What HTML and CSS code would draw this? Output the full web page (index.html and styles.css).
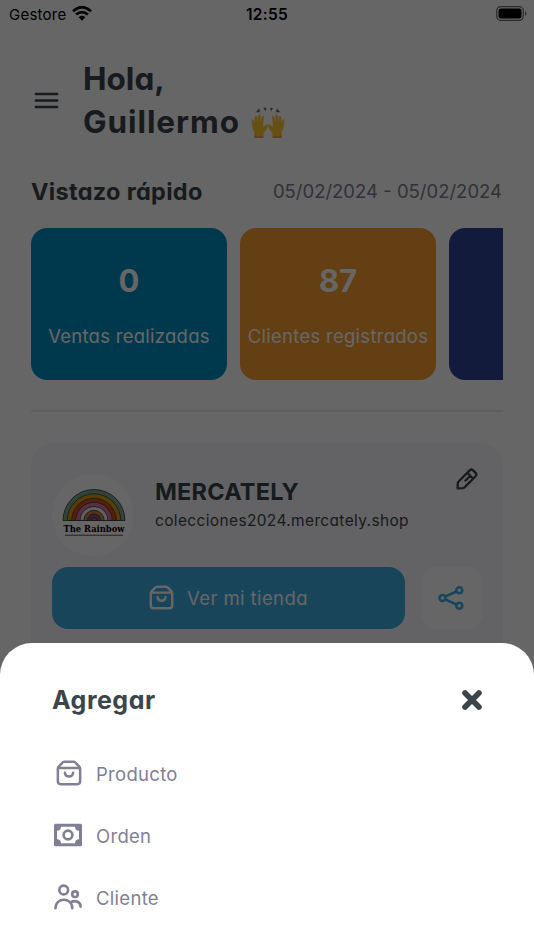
FILE: index.html
```html
<!DOCTYPE html>
<html lang="es">
<head>
<meta charset="utf-8">
<title>Mercately</title>
<link rel="stylesheet" href="styles.css">
</head>
<body>
<svg class="symbols" aria-hidden="true">
  <symbol id="bag" viewBox="0 0 28 28" fill="none" stroke="currentColor" stroke-width="2.7" stroke-linecap="round" stroke-linejoin="round">
    <path d="M2 9V23q0 3 3 3h18q3 0 3-3V9q0-1-.9-1.900L21.500 3.300Q20.400 2 19 2H9Q7.600 2 6.500 3.300L2.900 7.100Q2 8 2 9zM2.700 8.500h22.600M9.600 13.800c.6 5.200 8.200 5.200 8.800 0"/>
  </symbol>
</svg>
<div class="screen">
  <header class="status">
    <div class="carrier"><span class="t-carrier">Gestore</span>
      <svg class="wifi" viewBox="0 0 20 15"><path d="M1 5.200q9-8.100 18 0M4.100 8.600q5.900-5.100 11.800 0" fill="none" stroke="#000" stroke-width="2.700"/><path d="M6.600 11.200q3.400-2.800 6.800 0L10 14.700z"/></svg>
    </div>
    <span class="t-time">12:55</span>
    <svg class="battery" viewBox="0 0 31 15"><rect x=".7" y=".7" width="26.600" height="13.600" rx="4" fill="none" stroke="#6a6a6a" stroke-width="1.200"/><rect x="2.500" y="2.500" width="23" height="10" rx="2.300"/><path d="M29 5.200q3 2.300 0 4.600z" fill="#6a6a6a"/></svg>
  </header>

  <div class="greeting">
    <svg class="menu" viewBox="0 0 24 17"><path d="M1.300 2h21.400M1.300 8.500h21.400M1.300 15h21.400" stroke="currentColor" stroke-width="2.400" stroke-linecap="round"/></svg>
    <h1><span class="t-hola">Hola,</span><br><span class="t-name">Guillermo</span>
      <svg class="hands" viewBox="0 0 34 32">
        <path d="M4.800 5.300l3.300-4 1.200 4zM12.200 .8l3.400-.1-1.200 3.900zM18.800 .7l3.300.2-2 3.700zM26 1.300l3.300 4-4.500 0z" fill="#777"/>
        <g id="hand" fill="#ffc52e"><path d="M3.200 31v-6C1.500 22 .7 18 .8 13q1.300-1.400 2.100.5l.5 3 .5-6.800q1.200-1.700 2.200 0l.4 6 .8-7.500q1.300-1.500 2.300.2l.1 7.300 1.200-6.300q1.500-1.300 2 .4l-.6 7.500-.1 3.200 2.700-3q2-1 2.100 1-1.400 5.100-4.500 7.500V31z"/><path d="M3.300 29h9.100v2H3.300z" fill="#f0a92a"/></g>
        <use href="#hand" transform="translate(34 0) scale(-1 1)"/>
      </svg>
    </h1>
  </div>

  <div class="overview"><h2 class="t-vistazo">Vistazo rápido</h2><span class="t-date">05/02/2024 - 05/02/2024</span></div>
  <div class="cards">
    <article class="card sales"><strong>0</strong><span>Ventas realizadas</span></article>
    <article class="card clients"><strong>87</strong><span>Clientes registrados</span></article>
    <article class="card next"></article>
  </div>
  <hr>

  <section class="shop">
    <div class="shop-head">
      <div class="logo">
        <svg viewBox="0 0 82 82">
          <g stroke="#38383a" stroke-width=".8">
            <path d="M11 46.500a31 31 0 0 1 62 0z" fill="#7ca999"/>
            <path d="M15.300 46.500a26.700 26.700 0 0 1 53.400 0z" fill="#d89d00"/>
            <path d="M19.700 46.500a22.300 22.300 0 0 1 44.600 0z" fill="#d84e20"/>
            <path d="M23.800 46.500a18.200 18.200 0 0 1 36.400 0z" fill="#db74a2"/>
            <path d="M28 46.500a14 14 0 0 1 28 0z" fill="#f2f2f4"/>
            <path d="M31.800 46.500a10.200 10.200 0 0 1 20.400 0z" fill="#d77d42"/>
            <path d="M35.500 46.500a6.500 6.500 0 0 1 13 0z" fill="#795093"/>
            <path d="M39 46.500a3 3 0 0 1 6 0z" fill="#d84e20"/>
          </g>
          <text x="11.500" y="58" textLength="61" lengthAdjust="spacingAndGlyphs">The Rainbow</text>
          <path d="M13 61.300h58" stroke="#555" stroke-width="1.100"/>
        </svg>
      </div>
      <div class="shop-info"><h2 class="t-shop">MERCATELY</h2><span class="t-url">colecciones2024.mercately.shop</span></div>
      <svg class="pencil" viewBox="0 0 22 22" fill="none" stroke="currentColor" stroke-width="2.300" stroke-linejoin="round"><path d="M1.600 20.400l.2-5.200q.1-1 .8-1.700L13.700 2.400q1.700-1.700 3.400 0l2.500 2.500q1.700 1.700 0 3.400L8.500 19.400q-.7.700-1.700.8zM11.300 4.800l5.900 5.900M8.800 13.200l5.200-5.200"/></svg>
    </div>
    <div class="shop-actions">
      <button class="visit"><svg class="bag"><use href="#bag"/></svg><span>Ver mi tienda</span></button>
      <button class="share"><svg viewBox="0 0 26 24" fill="none" stroke="currentColor" stroke-width="2.500"><circle cx="4.500" cy="12" r="3"/><circle cx="21.300" cy="4.200" r="3"/><circle cx="21.300" cy="19.800" r="3"/><path d="M7.300 10.700l11.200-5.200M7.300 13.300l11.200 5.200"/></svg></button>
    </div>
  </section>

  <div class="backdrop"></div>
  <section class="sheet">
    <div class="sheet-head"><h2 class="t-agregar">Agregar</h2>
      <svg class="close" viewBox="0 0 20 20"><path d="M3 3l14 14M17 3L3 17" stroke="currentColor" stroke-width="5.600" stroke-linecap="round"/></svg>
    </div>
    <ul>
      <li><svg class="product"><use href="#bag"/></svg><span>Producto</span></li>
      <li><svg viewBox="0 0 28 28"><rect y="2.700" width="28" height="22.600" rx="1.500" fill="currentColor"/><path d="M7 5.800h14q0 3.700 3.900 4v8.400q-3.900.3-3.900 4H7q0-3.700-3.900-4V9.800q3.900-.3 3.900-4z" fill="#fff"/><circle cx="14" cy="14" r="4.400" fill="none" stroke="currentColor" stroke-width="2.600"/></svg><span>Orden</span></li>
      <li><svg viewBox="0 0 28 28" fill="none" stroke="currentColor" stroke-width="2.600" stroke-linecap="round"><circle cx="9.700" cy="7" r="4.400"/><circle cx="21" cy="11.200" r="2.800"/><path d="M1.500 25.300c0-11.400 16.800-11.400 16.800 0M17.300 19c4-2.300 9.300.2 9.300 4.600"/></svg><span>Cliente</span></li>
    </ul>
  </section>
</div>
</body>
</html>
```
FILE: styles.css
```css
* { box-sizing: border-box; }
body { margin: 0; color: #3b454b; font-family: Inter, "Open Sans", sans-serif; font-feature-settings: "cv11"; }
h1, h2, ul { margin: 0; padding: 0; }
h1, h2 { font-weight: 700; white-space: nowrap; }
button { border: 0; padding: 0; font: inherit; font-feature-settings: inherit; }
svg { display: block; flex: none; }
.symbols { position: absolute; width: 0; height: 0; }
.screen { position: relative; width: 534px; height: 950px; overflow: hidden; background: #fff; padding: 0 31px; }
.status { display: grid; grid-template-columns: 1fr auto 1fr; align-items: center; height: 28px; margin: 0 -24px 0 -22px; color: #000; }
.carrier { display: flex; align-items: center; gap: 5px; font-size: 15px; letter-spacing: .25px; }
.wifi { width: 20px; height: 15px; margin-top: -2px; }
.t-time { font-size: 15.5px; font-weight: 600; letter-spacing: .25px; margin-right: 2px; }
.battery { width: 31px; height: 15px; justify-self: end; margin-top: -1px; }
.greeting { display: flex; align-items: center; height: 88px; margin-top: 28px; padding-left: 3px; }
.menu { width: 25px; height: 17px; margin-right: 24px; }
h1 { font-size: 31.500px; line-height: 43.500px; }
.t-hola { letter-spacing: 0; }
.t-name { letter-spacing: .9px; }
.hands { display: inline-block; width: 34px; height: 32px; margin-left: 4px; vertical-align: -6px; }
.overview { display: flex; justify-content: space-between; align-items: center; height: 30px; margin-top: 32px; padding-right: 1px; }
.t-vistazo { font-size: 23.500px; letter-spacing: .3px; }
.t-date { font-size: 18.500px; color: #7c7c92; letter-spacing: 0; }
.cards { display: flex; gap: 13px; margin-top: 22px; width: 472px; overflow: hidden; }
.card { flex: none; width: 196px; height: 151.500px; border-radius: 16px; color: #fff; display: flex; flex-direction: column; align-items: center; padding-top: 32px; }
.card strong { font-size: 31px; line-height: 42px; }
.card span { font-size: 18.500px; line-height: 26px; margin-top: 21px; letter-spacing: .27px; white-space: nowrap; }
.sales { background: #0090c3; }
.clients { background: #fa9f30; }
.next { background: #2d4496; }
hr { border: 0; height: 2px; margin: 30.500px 0 0; background: #ececef; }
.shop { height: 260px; margin-top: 31px; padding: 20px 20.500px 0 21px; border-radius: 22px; background: #f8f8fc; }
.shop-head { display: flex; height: 103.500px; }
.logo { width: 82px; height: 82px; margin-top: 11px; border-radius: 50%; background: #fff; }
.logo text { font: 700 9px "DejaVu Serif", serif; fill: #000; }
.shop-info { flex: 1; margin: 14px 0 0 21px; display: flex; flex-direction: column; }
.t-shop { font-size: 23.500px; line-height: 30px; letter-spacing: .2px; }
.t-url { font-size: 15.500px; line-height: 27px; font-weight: 400; letter-spacing: .350px; }
.pencil { width: 22px; height: 22px; margin: 5px 5px 0 0; }
.shop-actions { display: flex; justify-content: space-between; }
.visit { width: 353px; height: 62px; border-radius: 16px; background: #3eade1; color: #fff; display: flex; align-items: center; justify-content: center; gap: 13px; font-size: 18.500px; letter-spacing: .4px; }
.bag { width: 25px; height: 25px; }
.share { width: 61.500px; height: 62px; border-radius: 16px; background: #fff; color: #3eade1; display: grid; place-items: center; }
.share svg { width: 26px; height: 24px; margin-right: 2px; }
.backdrop { position: absolute; inset: 0; background: rgba(0, 0, 0, .6); }
.sheet { position: absolute; left: 0; right: 0; top: 643px; bottom: 0; background: #fff; border-radius: 32px 32px 0 0; padding: 41px 52px 0; }
.sheet-head { display: flex; justify-content: space-between; align-items: center; height: 32px; }
.t-agregar { font-size: 25px; letter-spacing: .5px; }
.close { width: 20px; height: 20px; }
ul { list-style: none; margin-top: 27px; }
li { display: flex; align-items: center; height: 62px; padding-left: 2px; gap: 14px; font-size: 18.500px; letter-spacing: .3px; color: #807f95; }
li svg { width: 28px; height: 28px; margin-top: -2px; }
li .product { width: 26px; height: 26px; margin: -2px 0 0 2px; }
```
